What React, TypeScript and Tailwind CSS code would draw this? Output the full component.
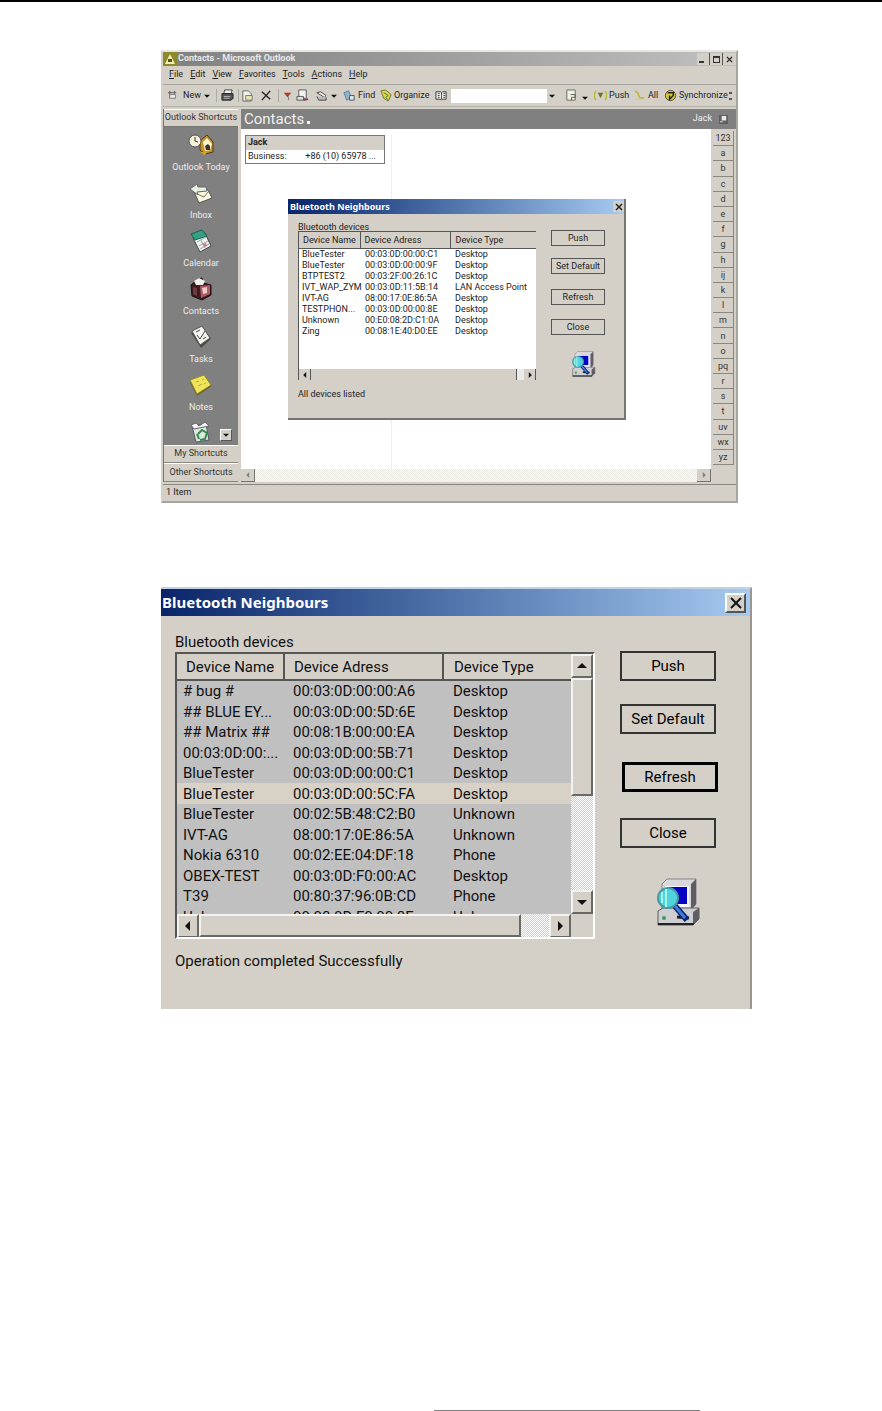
import type { ReactNode } from "react";
import clsx from "clsx";

type Device = { name: string; address: string; type: string };

const NEARBY: Device[] = [
  { name: "BlueTester", address: "00:03:0D:00:00:C1", type: "Desktop" },
  { name: "BlueTester", address: "00:03:0D:00:00:9F", type: "Desktop" },
  { name: "BTPTEST2", address: "00:03:2F:00:26:1C", type: "Desktop" },
  { name: "IVT_WAP_ZYM", address: "00:03:0D:11:5B:14", type: "LAN Access Point" },
  { name: "IVT-AG", address: "08:00:17:0E:86:5A", type: "Desktop" },
  { name: "TESTPHON...", address: "00:03:0D:00:00:8E", type: "Desktop" },
  { name: "Unknown", address: "00:E0:08:2D:C1:0A", type: "Desktop" },
  { name: "Zing", address: "00:08:1E:40:D0:EE", type: "Desktop" },
];

const DEVICES: Device[] = [
  { name: "# bug #", address: "00:03:0D:00:00:A6", type: "Desktop" },
  { name: "## BLUE EY...", address: "00:03:0D:00:5D:6E", type: "Desktop" },
  { name: "## Matrix ##", address: "00:08:1B:00:00:EA", type: "Desktop" },
  { name: "00:03:0D:00:...", address: "00:03:0D:00:5B:71", type: "Desktop" },
  { name: "BlueTester", address: "00:03:0D:00:00:C1", type: "Desktop" },
  { name: "BlueTester", address: "00:03:0D:00:5C:FA", type: "Desktop" },
  { name: "BlueTester", address: "00:02:5B:48:C2:B0", type: "Unknown" },
  { name: "IVT-AG", address: "08:00:17:0E:86:5A", type: "Unknown" },
  { name: "Nokia 6310", address: "00:02:EE:04:DF:18", type: "Phone" },
  { name: "OBEX-TEST", address: "00:03:0D:F0:00:AC", type: "Desktop" },
  { name: "T39", address: "00:80:37:96:0B:CD", type: "Phone" },
  { name: "Unknown", address: "00:08:0D:F0:00:8F", type: "Unknown" },
];

const SELECTED = 5;

const MENUS = ["File", "Edit", "View", "Favorites", "Tools", "Actions", "Help"];

const INDEX = [
  "123", "a", "b", "c", "d", "e", "f", "g", "h", "ij", "k",
  "l", "m", "n", "o", "pq", "r", "s", "t", "uv", "wx", "yz",
];

function ComputerIcon({ className }: { className: string }) {
  return (
    <svg viewBox="0 0 44 48" className={className} aria-hidden="true">
      <path d="M5 6 10 1h29v25l-5 6H5z" fill="#d9d8dd" stroke="#85838a" />
      <path d="M34 6 39 1v25l-5 6z" fill="#5f5d64" />
      <path d="M8 8h24v21H8z" fill="#f6f6fa" />
      <path d="M10 9h20v17H10z" fill="#0404c4" />
      <path d="M1 33 6 30h36v11l-6 6H1z" fill="#cfced2" stroke="#5c5a60" />
      <path d="M36 34 42 30v11l-6 6z" fill="#5f5d64" />
      <path d="M1 46h36" stroke="#222" strokeWidth="2" />
      <circle cx="7" cy="40" r="2" fill="#3d9a5c" />
      <path d="m20 39 12 1" stroke="#222" strokeWidth="3" />
      <circle cx="11" cy="20" r="10" fill="#4fd3dc" stroke="#4a9aa4" strokeWidth="2" />
      <path d="M9 11v18M5 14v11" stroke="#a7f3e7" strokeWidth="2" />
      <path d="m18 28 12 14" stroke="#0a2470" strokeWidth="6" />
      <path d="m18 28 10 12" stroke="#3f7ddc" strokeWidth="3" />
    </svg>
  );
}

function Arrow({ dir, className }: { dir: "up" | "down" | "left" | "right"; className: string }) {
  const paths = {
    up: "M0 7 5 2l5 5z",
    down: "M0 3h10L5 8z",
    left: "M7 0v10L2 5z",
    right: "M3 0v10l5-5z",
  };
  return (
    <svg viewBox="0 0 10 10" className={className} aria-hidden="true">
      <path d={paths[dir]} fill="#111" />
    </svg>
  );
}

function ScrollButton({ dir }: { dir: "up" | "down" | "left" | "right" }) {
  return (
    <button
      type="button"
      aria-label={`Scroll ${dir}`}
      className="flex h-6 w-[22px] shrink-0 items-center justify-center border-2 border-t-[#f4f2ee] border-r-[#6b6964] border-b-[#6b6964] border-l-[#f4f2ee] bg-[#d4d0c8]"
    >
      <Arrow dir={dir} className="size-[10px]" />
    </button>
  );
}

/* ---------- Outlook window ---------- */

function ToolIcon({ children, className }: { children: ReactNode; className?: string }) {
  return (
    <svg viewBox="0 0 14 14" className={clsx("size-[13px] shrink-0", className)} fill="none" aria-hidden="true">
      {children}
    </svg>
  );
}

const SHORTCUTS: { label: string; icon: ReactNode }[] = [
  {
    label: "Outlook Today",
    icon: (
      <>
        <path d="M12 8 19 2l6 7v10l-8 2-5-4z" fill="#c8952c" stroke="#4a3a1c" />
        <path d="m15 9 4-4 5 6-2 6-5 1z" fill="#fff6d0" />
        <path d="m17 13 3-2 2 2v4h-4z" fill="#3a332a" />
        <circle cx="7" cy="8" r="6" fill="#f6f0d8" stroke="#555" />
        <path d="M7 4v4l3 1" stroke="#333" />
        <path d="m12 19 5 3 2-3" fill="#d9a421" />
      </>
    ),
  },
  {
    label: "Inbox",
    icon: (
      <>
        <path d="m6 11 14-2 4 8-13 5z" fill="#fbf8dc" stroke="#555" />
        <path d="m7 12 9 4 5-6" stroke="#77756a" />
        <path d="m2 8 7-5 1 3 8 0 1 4-10 1 1 3z" fill="#e8f2df" stroke="#667" />
      </>
    ),
  },
  {
    label: "Calendar",
    icon: (
      <>
        <path d="m5 9 12-5 6 13-11 6z" fill="#eef3ee" stroke="#444" />
        <path d="M3 5 14 1l5 6-12 4z" fill="#32a184" stroke="#1c5f4d" />
        <path d="m9 13 9-5M11 17l9-5M12 20l9-5M13 11l4 8" stroke="#9aa" />
        <path d="m15 15 3-1 1 3-3 1z" fill="#d07a86" />
      </>
    ),
  },
  {
    label: "Contacts",
    icon: (
      <>
        <path d="m3 8 7-6 4-1 1 5 8 2v10l-9 5-10-4z" fill="#3b1c20" stroke="#1a1010" />
        <path d="m6 4 5-3 6 3-2 4-7 0z" fill="#f0f0ee" />
        <path d="m12 9 10-1v9l-9 4z" fill="#b05a66" />
        <path d="m14 11 5-1v6l-4 1z" fill="#f1c9c5" />
        <path d="m5 10 4 1v8l-4-2z" fill="#6c3a40" />
      </>
    ),
  },
  {
    label: "Tasks",
    icon: (
      <>
        <path d="M3 8 14 1l9 13-10 9z" fill="#514b45" />
        <path d="M4 6 14 1l8 12-10 7z" fill="#f4f4ee" stroke="#555" />
        <path d="m9 10 3 4 5-8M8 7l4-2M15 14l3-2" stroke="#444" />
      </>
    ),
  },
  {
    label: "Notes",
    icon: (
      <>
        <path d="m2 10 14-7 8 10-15 10z" fill="#6a6430" />
        <path d="m2 7 14-5 7 10-14 9z" fill="#f0e55a" stroke="#8f8628" />
        <path d="m8 9 3-1M14 7l2-1M10 13l4-2M16 11l2-1" stroke="#b8aa2c" />
      </>
    ),
  },
];

function ShortcutBar() {
  return (
    <nav className="flex w-[75px] shrink-0 flex-col border-l border-[#77756f]">
      <button type="button" className="h-[18px] border-y border-t-white border-b-[#77756f] text-[9px] whitespace-nowrap text-[#333]">
        Outlook Shortcuts
      </button>
      <div className="relative h-[318px] overflow-hidden bg-[#808080] pt-[6px]">
        {SHORTCUTS.map((item) => (
          <a key={item.label} href="#" className="flex h-12 flex-col items-center gap-1 text-[9px] leading-[12px] text-[#ececec]">
            <svg viewBox="0 0 26 24" className="h-6 w-[26px] shrink-0" fill="none" aria-hidden="true">
              {item.icon}
            </svg>
            {item.label}
          </a>
        ))}
        <a href="#" aria-label="Deleted Items" className="flex justify-center">
          <svg viewBox="0 0 26 24" className="h-6 w-[26px]" fill="none" aria-hidden="true">
            <path d="m4 5 14-2 3 16-13 2z" fill="#dfe6dd" stroke="#556" />
            <path d="m3 4 5-2 3 3 6-4 4 4-15 3z" fill="#f7f7f2" stroke="#667" />
            <path d="m10 13 4-4 5 3M19 12l-2 6-5 1M11 18l-2-5" stroke="#2f8a4c" strokeWidth="2" />
          </svg>
        </a>
        <button
          type="button"
          aria-label="More shortcuts"
          className="absolute right-[6px] bottom-[4px] flex size-3 items-center justify-center border border-t-white border-r-[#555] border-b-[#555] border-l-white bg-[#d4d0c8]"
        >
          <Arrow dir="down" className="size-[6px]" />
        </button>
      </div>
      <button type="button" className="h-[18px] border-y border-t-white border-b-[#8a8780] text-[9px] text-[#333]">
        My Shortcuts
      </button>
      <button type="button" className="h-[19px] border-y border-t-white border-b-[#8a8780] text-[9px] text-[#333]">
        Other Shortcuts
      </button>
    </nav>
  );
}

function Toolbar() {
  return (
    <div className="flex h-[23px] items-center overflow-hidden border-y border-t-[#a5a29b] border-b-[#b4b1a9] px-1 text-[9px] text-[#222]">
      <button type="button" className="flex w-[49px] items-center gap-[3px]">
        <ToolIcon>
          <path d="M1 4h9M3 2v8M8 2v3" stroke="#555" />
          <path d="M3 6h6v4H3z" fill="#eee" stroke="#777" />
        </ToolIcon>
        New
        <Arrow dir="down" className="size-[6px]" />
      </button>
      <button type="button" aria-label="Print" className="w-[22px] border-l border-[#aaa] pl-1">
        <ToolIcon>
          <path d="M4 1h8l-1 4H3z" fill="#eee" stroke="#444" />
          <path d="M1 5h12v5l-2 2H1z" fill="#555" stroke="#222" />
          <path d="M3 8h7M3 10h6" stroke="#bbb" />
        </ToolIcon>
      </button>
      <button type="button" aria-label="Move to folder" className="w-[18px] border-l border-[#aaa] pl-[2px]">
        <ToolIcon>
          <path d="M2 2h6l3 3v8H2z" fill="#f1f1ee" stroke="#666" />
          <path d="M5 7h7v5H5z" fill="#e8e4b0" stroke="#777" />
        </ToolIcon>
      </button>
      <button type="button" aria-label="Delete" className="w-[22px] pl-1">
        <ToolIcon>
          <path d="m2 3 9 8M11 2 2 12" stroke="#222" strokeWidth="1.5" />
        </ToolIcon>
      </button>
      <button type="button" aria-label="Flag" className="w-[18px] border-l border-[#aaa] pl-[2px]">
        <ToolIcon>
          <path d="M3 4h8L7 9z" fill="#b03a1e" />
          <path d="M8 8v4" stroke="#777" />
        </ToolIcon>
      </button>
      <button type="button" aria-label="New message to contact" className="w-[19px]">
        <ToolIcon>
          <path d="M3 1h8v9H3z" fill="#f4f4f4" stroke="#555" />
          <path d="M1 8h7v4H1z" fill="#ddd" stroke="#555" />
          <path d="m8 12 5-1" stroke="#903a58" strokeWidth="2" />
        </ToolIcon>
      </button>
      <button type="button" aria-label="Dial" className="flex w-[28px] items-center gap-[3px]">
        <ToolIcon>
          <path d="m2 4 4-1 6 4-2 2z" fill="#eee" stroke="#444" />
          <path d="m2 8 2 4 8 0V9" fill="#bbb" stroke="#444" />
        </ToolIcon>
        <Arrow dir="down" className="size-[6px]" />
      </button>
      <button type="button" className="flex w-[37px] items-center gap-[2px]">
        <ToolIcon>
          <path d="m1 4 5-2 3 7-5 3z" fill="#8fb4cc" stroke="#5c7f95" />
          <path d="M7 7h5v5H7z" fill="#d9e4ea" stroke="#456" />
        </ToolIcon>
        Find
      </button>
      <button type="button" className="flex w-[55px] items-center gap-[1px]">
        <ToolIcon>
          <path d="m1 2 5-1 6 5-3 7-5-3z" fill="#d8d34e" stroke="#75722a" />
          <path d="m4 4 5 3-3 2 3 3" stroke="#567a3d" />
        </ToolIcon>
        Organize
      </button>
      <button type="button" aria-label="Address book" className="w-[16px]">
        <ToolIcon>
          <path d="M1 3h5l1 1 1-1h4v8H8l-1 1-1-1H1z" fill="#eee" stroke="#333" />
          <path d="M3 5h2M3 7h2M3 9h2M9 5h2M9 7h2M9 9h2M7 4v7" stroke="#444" />
        </ToolIcon>
      </button>
      <input type="text" aria-label="Find a contact" className="h-[14px] w-[96px] min-w-0 bg-white px-1 outline-none" />
      <button type="button" aria-label="Recent contacts" className="w-[18px] pl-[2px]">
        <Arrow dir="down" className="size-[6px]" />
      </button>
      <button type="button" aria-label="Help" className="flex w-[29px] items-center gap-1">
        <ToolIcon>
          <path d="M2 1h9v11H2z" fill="#f0f0e4" stroke="#666b4c" />
          <path d="M6 6h5v3H7v3" stroke="#555" />
        </ToolIcon>
        <Arrow dir="down" className="mt-1 size-[6px]" />
      </button>
      <button type="button" className="flex w-[39px] items-center gap-[2px]">
        <ToolIcon>
          <path d="M2 2c-2 3-2 7 0 10M12 2c2 3 2 7 0 10" stroke="#b5bb2a" strokeWidth="1.5" />
          <path d="M4 4h6L7 10z" fill="#6e7420" />
        </ToolIcon>
        Push
      </button>
      <button type="button" className="flex w-[31px] items-center gap-[2px]">
        <ToolIcon>
          <path d="m2 2 3 2 2 5 5 1" stroke="#b5bb2a" strokeWidth="1.5" />
          <path d="M3 11h7" stroke="#ccc96a" />
        </ToolIcon>
        All
      </button>
      <button type="button" className="flex items-center gap-[2px]">
        <ToolIcon>
          <circle cx="7" cy="7" r="5.500" fill="#d4c93c" stroke="#4d4a22" />
          <path d="M4 4h6v3L6 11V7" stroke="#222" strokeWidth="1.500" />
        </ToolIcon>
        Synchronize
      </button>
      <span className="ml-auto flex flex-col gap-1" aria-hidden="true">
        <span className="h-[2px] w-[3px] bg-[#555]" />
        <span className="h-[2px] w-[3px] bg-[#555]" />
      </span>
    </div>
  );
}

function SmallButton({ children, className }: { children: ReactNode; className?: string }) {
  return (
    <button type="button" className={clsx("h-4 w-full border border-[#555] text-[9px] leading-[12px] text-[#222]", className)}>
      {children}
    </button>
  );
}

function SmallDialog() {
  return (
    <section
      aria-label="Bluetooth Neighbours search"
      className="absolute top-[147px] left-[125px] h-[221px] w-[338px] border-r-2 border-b-2 border-[#77756f] bg-[#d4d0c8] text-[9px] text-[#222]"
    >
      <header className="flex h-[15px] items-center justify-between bg-linear-to-r from-[#0a246a] to-[#a6caf0] pl-[2px]">
        <h2 className="font-[Noto_Sans,sans-serif] text-[9px] font-bold text-white">Bluetooth Neighbours</h2>
        <button type="button" aria-label="Close search" className="flex size-[11px] items-center justify-center bg-[#d4d0c8]">
          <svg viewBox="0 0 8 8" className="size-[8px]" aria-hidden="true">
            <path d="m1 1 6 6M7 1 1 7" stroke="#222" strokeWidth="1.500" />
          </svg>
        </button>
      </header>
      <div className="flex pt-2 pr-[19px] pl-[10px]">
        <div className="w-[238px]">
          <p className="h-[9px] leading-[10px]">Bluetooth devices</p>
          <div className="flex h-[149px] flex-col border-t border-l border-[#555] bg-white">
            <table className="w-full table-fixed text-left leading-[10px]">
              <colgroup>
                <col className="w-[61px]" />
                <col className="w-[90px]" />
                <col />
              </colgroup>
              <thead>
                <tr className="h-4 bg-[#d4d0c8]">
                  <th className="border-r border-b border-[#555] pl-[4px] font-normal whitespace-nowrap">Device Name</th>
                  <th className="border-r border-b border-[#555] pl-[4px] font-normal">Device Adress</th>
                  <th className="border-b border-[#555] pl-[5px] font-normal">Device Type</th>
                </tr>
              </thead>
              <tbody>
                {NEARBY.map((d, i) => (
                  <tr key={i} className="h-[11px] whitespace-nowrap">
                    <td className="pl-[3px]">{d.name}</td>
                    <td className="pl-[5px]">{d.address}</td>
                    <td className="pl-[5px]">{d.type}</td>
                  </tr>
                ))}
              </tbody>
            </table>
            <div className="mt-auto flex h-[11px] items-center justify-between bg-[#d4d0c8]">
              <button type="button" aria-label="Scroll list left" className="flex h-full w-[12px] items-center justify-center border-r border-[#555]">
                <Arrow dir="left" className="size-[6px]" />
              </button>
              <span className="h-full flex-1 border-r border-[#555]" />
              <span className="h-full w-[7px] bg-[#eceae6]" />
              <button type="button" aria-label="Scroll list right" className="flex h-full w-[12px] items-center justify-center border-r border-[#555]">
                <Arrow dir="right" className="size-[6px]" />
              </button>
            </div>
          </div>
          <p className="mt-2 leading-[12px]">All devices listed</p>
        </div>
        <div className="ml-auto flex w-[54px] flex-col pt-2">
          <SmallButton>Push</SmallButton>
          <SmallButton className="mt-3">Set Default</SmallButton>
          <SmallButton className="mt-[15px]">Refresh</SmallButton>
          <SmallButton className="mt-[14px]">Close</SmallButton>
          <ComputerIcon className="mt-4 ml-[21px] h-[26px] w-6" />
        </div>
      </div>
    </section>
  );
}

function OutlookWindow() {
  return (
    <section
      aria-label="Contacts - Microsoft Outlook"
      className="relative w-full max-w-[577px] border-2 border-t-[#e8e6e0] border-r-[#a8a59e] border-b-[#a8a59e] border-l-[#d4d0c8] bg-[#d4d0c8]"
    >
      <header className="flex h-[14px] items-center bg-linear-to-r from-[#808080] to-[#c0c0c0] text-[#e8e8e8]">
        <svg viewBox="0 0 14 14" className="mr-[1px] size-[14px]" aria-hidden="true">
          <path d="M0 0h14v14H0z" fill="#8c8a2a" />
          <path d="M2 12 7 2l5 10z" fill="#f4f0b0" />
          <path d="M5 7h4v3H5z" fill="#55531c" />
        </svg>
        <h1 className="flex-1 text-[9px] font-bold">Contacts - Microsoft Outlook</h1>
        <div className="flex bg-[#d4d0c8]">
          <button type="button" aria-label="Minimize" className="flex h-3 w-[13px] items-end border-r border-[#555] p-[2px]">
            <span className="h-[2px] w-[5px] bg-[#333]" />
          </button>
          <button type="button" aria-label="Restore" className="flex h-3 w-[13px] items-center justify-center border-r border-[#555]">
            <span className="size-[7px] border border-t-2 border-[#333]" />
          </button>
          <button type="button" aria-label="Close Outlook" className="flex h-3 w-[13px] items-center justify-center">
            <svg viewBox="0 0 8 8" className="size-[7px]" aria-hidden="true">
              <path d="m1 1 6 6M7 1 1 7" stroke="#222" strokeWidth="1.500" />
            </svg>
          </button>
        </div>
      </header>
      <div className="flex h-[18px] items-center gap-[7px] pl-[6px] text-[9px] text-[#222]">
        {MENUS.map((menu) => (
          <button key={menu} type="button">
            <span className="underline">{menu[0]}</span>
            {menu.slice(1)}
          </button>
        ))}
      </div>
      <Toolbar />

      <div className="flex pt-[2px]">
        <ShortcutBar />
        <div className="ml-[3px] flex min-w-0 flex-1 flex-col">
          <div className="flex h-5 items-center justify-between bg-[#808080] pr-2 pl-[3px] text-[#f0f0f0]">
            <h2 className="flex items-end gap-[3px] text-[15px] leading-[18px]">
              Contacts <span className="mb-[4px] size-[3px] bg-[#f0f0f0]" />
            </h2>
            <span className="flex items-center gap-[7px] text-[9px]">
              Jack
              <svg viewBox="0 0 10 10" className="size-[9px]" aria-hidden="true">
                <path d="M0 0h10v10H0z" fill="#606060" />
                <path d="M3 1h5v5H3zM1 7h3v1H1z" fill="#e8e8e8" />
              </svg>
            </span>
          </div>
          <div className="flex flex-1">
            <div className="flex min-w-0 flex-1 flex-col bg-white">
              <div className="mt-[6px] ml-[4px] flex-1">
                <div className="flex h-full">
                  <div className="w-[147px] border-r border-[#eeeeee]">
                    <article className="w-[140px] border border-[#777] text-[9px] leading-[12px] text-[#222]">
                      <h3 className="h-[14px] bg-[#d4d0c8] px-[2px] font-bold">Jack</h3>
                      <p className="flex h-[13px] justify-between pr-2 pl-[2px]">
                        <span>Business:</span>
                        <span>+86 (10) 65978 ...</span>
                      </p>
                    </article>
                  </div>
                </div>
              </div>
              <div className="flex h-[13px] items-center justify-between bg-[repeating-conic-gradient(#fff_0_25%,#e8e6e0_0_50%)] bg-size-[2px_2px]">
                <button type="button" aria-label="Scroll contacts left" className="flex h-full w-[14px] items-center justify-center border-r border-b border-[#77756f] bg-[#d4d0c8]">
                  <Arrow dir="left" className="size-[6px] opacity-40" />
                </button>
                <button type="button" aria-label="Scroll contacts right" className="flex h-full w-[14px] items-center justify-center border-r border-b border-[#77756f] bg-[#d4d0c8]">
                  <Arrow dir="right" className="size-[6px] opacity-40" />
                </button>
              </div>
            </div>
            <div className="flex w-[25px] flex-col pt-[2px] pr-[2px] pb-[17px] pl-[2px]">
              {INDEX.map((letter) => (
                <button
                  key={letter}
                  type="button"
                  className="min-h-0 flex-1 border-r border-b border-[#8a8780] text-[9px] leading-[12px] text-[#333]"
                >
                  {letter}
                </button>
              ))}
            </div>
          </div>
        </div>
      </div>
      <footer className="mt-[2px] h-[17px] border-t border-[#8a8780] pl-[3px] text-[9px] leading-[14px] text-[#222]">1 Item</footer>

      <SmallDialog />
    </section>
  );
}

/* ---------- Bluetooth Neighbours dialog ---------- */

function DialogButton({ children, className }: { children: ReactNode; className?: string }) {
  return (
    <button type="button" className={clsx("h-[30px] w-[96px] text-[15px] leading-5 text-black", className)}>
      {children}
    </button>
  );
}

function DeviceList() {
  return (
    <div className="border-2 border-t-[#555] border-r-white border-b-white border-l-[#555]">
      <div className="flex h-[260px]">
        <div className="min-w-0 flex-1 overflow-hidden bg-[#c0c0c0]">
          <table aria-labelledby="devices-label" className="h-[273px] w-full table-fixed text-left text-[15px] leading-5 text-[#111]">
            <colgroup>
              <col className="w-[107px]" />
              <col className="w-[159px]" />
              <col />
            </colgroup>
            <thead>
              <tr className="h-[26px] bg-[#d4d0c8]">
                <th className="border-r-2 border-b-2 border-[#555] pl-[9px] font-normal whitespace-nowrap">Device Name</th>
                <th className="border-r-2 border-b-2 border-[#555] pl-[9px] font-normal">Device Adress</th>
                <th className="border-b-2 border-[#555] pl-[10px] font-normal">Device Type</th>
              </tr>
            </thead>
            <tbody>
              {DEVICES.map((d, i) => (
                <tr key={i} className={clsx("whitespace-nowrap", i === SELECTED && "bg-[#d8d2c6]")}>
                  <td className="pl-[6px]">{d.name}</td>
                  <td className="pl-[9px]">{d.address}</td>
                  <td className="pl-[10px]">{d.type}</td>
                </tr>
              ))}
            </tbody>
          </table>
        </div>
        <div className="flex w-[22px] flex-col bg-[repeating-conic-gradient(#fff_0_25%,#d4d0c8_0_50%)] bg-size-[2px_2px]">
          <ScrollButton dir="up" />
          <div className="h-[118px] border-2 border-t-[#f4f2ee] border-r-[#6b6964] border-b-[#6b6964] border-l-[#f4f2ee] bg-[#d4d0c8]" />
          <div className="flex-1" />
          <ScrollButton dir="down" />
        </div>
      </div>
      <div className="flex h-[23px] overflow-hidden bg-[#d4d0c8] pr-[22px]">
        <div className="flex flex-1 bg-[repeating-conic-gradient(#fff_0_25%,#d4d0c8_0_50%)] bg-size-[2px_2px]">
          <ScrollButton dir="left" />
          <div className="w-[322px] border-2 border-t-[#f4f2ee] border-r-[#6b6964] border-b-[#6b6964] border-l-[#f4f2ee] bg-[#d4d0c8]" />
          <div className="flex-1" />
          <ScrollButton dir="right" />
        </div>
      </div>
    </div>
  );
}

function NeighboursDialog() {
  return (
    <section
      aria-labelledby="neighbours-title"
      className="w-full max-w-[591px] border-t-2 border-r-2 border-t-[#c4d0e4] border-r-[#9a9790] bg-[#d4d0c8]"
    >
      <header className="flex h-[27px] items-center justify-between bg-linear-to-r from-[#0a246a] to-[#a6caf0] pr-1">
        <h2 id="neighbours-title" className="pl-[1px] font-[Noto_Sans,sans-serif] text-[15px] font-bold text-white">
          Bluetooth Neighbours
        </h2>
        <button
          type="button"
          aria-label="Close dialog"
          className="flex h-5 w-[21px] items-center justify-center border-2 border-t-white border-r-[#555] border-b-[#555] border-l-white bg-[#d4d0c8]"
        >
          <svg viewBox="0 0 12 12" className="size-[12px]" aria-hidden="true">
            <path d="m1 1 10 10M11 1 1 11" stroke="#111" strokeWidth="2" />
          </svg>
        </button>
      </header>
      <div className="flex items-start pt-4 pb-[38px] pl-[14px]">
        <div className="w-[420px]">
          <p id="devices-label" className="text-[15px] leading-5 text-[#111]">
            Bluetooth devices
          </p>
          <DeviceList />
          <p className="mt-3 text-[15px] leading-5 text-[#111]">Operation completed Successfully</p>
        </div>
        <div className="ml-[25px] flex flex-col pt-[19px]">
          <DialogButton className="border-2 border-[#333]">Push</DialogButton>
          <DialogButton className="mt-[23px] border-2 border-[#333]">Set Default</DialogButton>
          <DialogButton className="mt-7 ml-[2px] border-3 border-black">Refresh</DialogButton>
          <DialogButton className="mt-[26px] border-2 border-[#333]">Close</DialogButton>
          <ComputerIcon className="mt-[30px] ml-[37px] h-12 w-11" />
        </div>
      </div>
    </section>
  );
}

export default function App() {
  return (
    <div className="flex min-h-screen flex-col border-t-2 border-black bg-white font-[Roboto,Arial,sans-serif]">
      <main className="flex flex-col gap-[84px] pt-12 pr-4 pl-[161px]">
        <OutlookWindow />
        <NeighboursDialog />
      </main>
      <hr className="mt-auto ml-[434px] w-[266px] border-t border-[#808080]" />
    </div>
  );
}
